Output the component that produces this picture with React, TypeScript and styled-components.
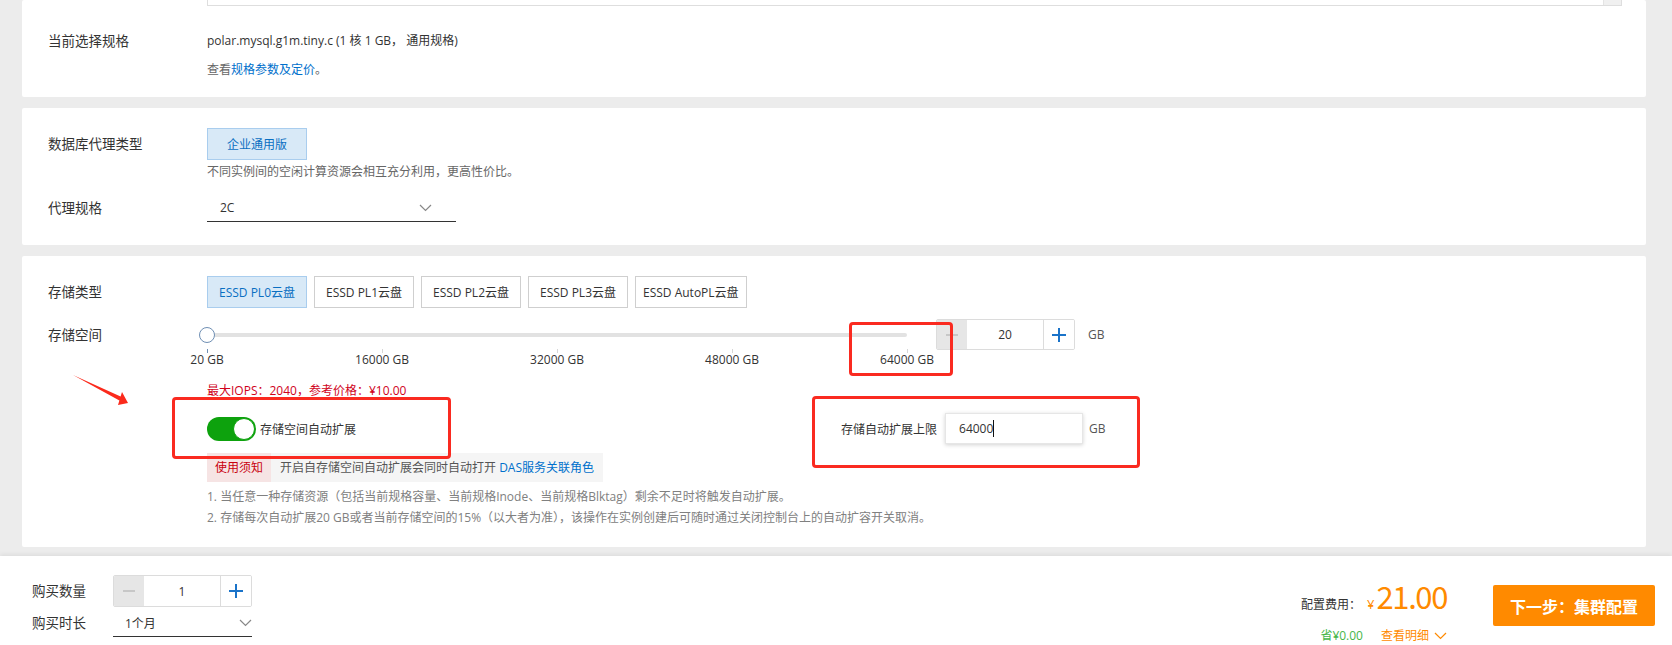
import React from 'react'
import styled, { createGlobalStyle } from 'styled-components'

const GlobalStyle = createGlobalStyle`
  html, body { margin: 0; padding: 0; }
  body {
    background: #ececec;
    font-family: 'Open Sans', 'Noto Sans CJK SC', sans-serif;
    font-size: 12px;
    color: #333;
  }
  * { box-sizing: border-box; }
`

const Page = styled.div`
  position: relative;
  width: 1672px;
  height: 645px;
  overflow: hidden;
  display: flex;
  flex-direction: column;
`

const Cards = styled.div`
  display: flex;
  flex-direction: column;
  gap: 11px;
  padding: 0 26px 0 22px;
`

const Card = styled.section<{ $pt: number; $pb: number }>`
  background: #fff;
  padding: ${(p) => p.$pt}px 0 ${(p) => p.$pb}px 26px;
  border-radius: 2px;
`

const ListTail = styled.div`
  margin-left: 159px;
  width: 1415px;
  height: 6px;
  border: 1px solid #dedede;
  border-top: none;
  display: flex;
  justify-content: flex-end;
  &::after {
    content: '';
    width: 17px;
    background: #f0f0f0;
    border-left: 1px solid #e4e4e4;
  }
`

const Row = styled.div<{ $mt?: number }>`
  display: flex;
  align-items: flex-start;
  margin-top: ${(p) => p.$mt ?? 0}px;
`

const Label = styled.div<{ $h?: number }>`
  width: 159px;
  flex-shrink: 0;
  font-size: 13.5px;
  line-height: ${(p) => p.$h ?? 20}px;
  color: #333;
`

const Field = styled.div`
  display: flex;
  flex-direction: column;
  align-items: flex-start;
`

const Value = styled.div`
  font-size: 12px;
  line-height: 20px;
  color: #333;
`

const Hint = styled.div<{ $mt?: number }>`
  font-size: 12px;
  line-height: 20px;
  color: #666;
  margin-top: ${(p) => p.$mt ?? 0}px;
`

const Link = styled.a`
  color: #0070cc;
  text-decoration: none;
`

const Options = styled.div`
  display: flex;
  gap: 7px;
`

const Option = styled.button<{ $active?: boolean }>`
  height: 32px;
  min-width: 100px;
  padding: 0 7px;
  font: inherit;
  font-size: 12px;
  background: ${(p) => (p.$active ? '#d8e9f7' : '#fff')};
  border: 1px solid ${(p) => (p.$active ? '#a9cdee' : '#cfcfcf')};
  color: ${(p) => (p.$active ? '#0a6fc2' : '#333')};
  border-radius: 0;
`

const Select = styled.div<{ $w: number; $pl: number; $pr: number }>`
  width: ${(p) => p.$w}px;
  height: 28px;
  border-bottom: 1px solid #333;
  display: flex;
  align-items: center;
  justify-content: space-between;
  padding: 0 ${(p) => p.$pr}px 0 ${(p) => p.$pl}px;
  font-size: 12px;
  color: #333;
`

const SliderLine = styled.div`
  display: flex;
  align-items: flex-start;
`

const Slider = styled.div`
  width: 700px;
`

const TrackArea = styled.div`
  position: relative;
  height: 30px;
  padding-top: 14px;
`

const Track = styled.div`
  height: 4px;
  background: #e2e2e2;
  border-radius: 2px;
`

const Thumb = styled.div`
  position: absolute;
  left: -8px;
  top: 8px;
  width: 16px;
  height: 16px;
  border-radius: 50%;
  background: #fff;
  border: 1.5px solid #6f8fb4;
`

const Ticks = styled.div`
  display: flex;
  justify-content: space-between;
`

const Tick = styled.div`
  width: 0;
  display: flex;
  flex-direction: column;
  align-items: center;
`

const TickMark = styled.div<{ $first?: boolean }>`
  width: 1px;
  height: 4px;
  background: ${(p) => (p.$first ? '#6f8fb4' : '#d6d6d6')};
`

const TickText = styled.span`
  white-space: nowrap;
  font-size: 12px;
  line-height: 14px;
  color: #333;
`

const Stepper = styled.div<{ $ml?: number; $h: number }>`
  display: flex;
  height: ${(p) => p.$h}px;
  margin-left: ${(p) => p.$ml ?? 0}px;
  border: 1px solid #dcdcdc;
  border-radius: 2px;
  overflow: hidden;
`

const StepBtn = styled.div<{ $disabled?: boolean }>`
  width: 30px;
  display: flex;
  align-items: center;
  justify-content: center;
  background: ${(p) => (p.$disabled ? '#e6e6e6' : '#fff')};
`

const StepValue = styled.div`
  width: 77px;
  display: flex;
  align-items: center;
  justify-content: center;
  background: #fff;
  border-right: 1px solid #dcdcdc;
  font-size: 12px;
  color: #333;
`

const Unit = styled.span<{ $ml: number; $h: number }>`
  margin-left: ${(p) => p.$ml}px;
  line-height: ${(p) => p.$h}px;
  font-size: 12px;
  color: #555;
`

const Iops = styled.div`
  margin-top: 14px;
  font-size: 12px;
  line-height: 20px;
  color: #d0021b;
`

const SwitchLine = styled.div`
  margin-top: 12px;
  display: flex;
  align-items: center;
  height: 31px;
`

const SwitchGroup = styled.div`
  width: 634px;
  display: flex;
  align-items: center;
  gap: 4px;
`

const Switch = styled.div<{ $on?: boolean }>`
  width: 49px;
  height: 24px;
  border-radius: 12px;
  background: ${(p) => (p.$on ? '#0da20d' : '#ccc')};
  display: flex;
  justify-content: ${(p) => (p.$on ? 'flex-end' : 'flex-start')};
  padding: 1px;
`

const Knob = styled.div`
  width: 22px;
  height: 22px;
  border-radius: 50%;
  background: #fff;
  border: 1px solid #0da20d;
`

const SwitchText = styled.span`
  font-size: 12px;
  color: #333;
`

const LimitLabel = styled.span`
  font-size: 12px;
  color: #333;
  margin-right: 8px;
`

const LimitInput = styled.div`
  width: 138px;
  height: 31px;
  border: 1px solid #e6e6e6;
  box-shadow: 0 1px 4px rgba(0, 0, 0, 0.18);
  padding-left: 13px;
  display: flex;
  align-items: center;
  font-size: 12px;
  color: #333;
`

const Caret = styled.span`
  width: 1px;
  height: 17px;
  background: #111;
`

const Notice = styled.div`
  margin-top: 9px;
  display: flex;
  height: 29px;
  background: #f5f5f5;
`

const NoticeTag = styled.span`
  padding: 0 8px;
  background: #f6e4e4;
  color: #c9000f;
  line-height: 29px;
`

const NoticeText = styled.span`
  padding: 0 9px;
  color: #555;
  line-height: 29px;
`

const Notes = styled.div`
  margin-top: 4px;
`

const Note = styled.div`
  color: #808080;
  line-height: 21px;
`

const Footer = styled.footer`
  margin-top: 9px;
  flex: 1;
  background: #fff;
  box-shadow: 0 -2px 4px rgba(0, 0, 0, 0.06);
  display: flex;
  justify-content: space-between;
  padding: 0 17px 0 32px;
`

const Buy = styled.div`
  padding-top: 19px;
  display: flex;
  flex-direction: column;
  gap: 2px;
`

const BuyRow = styled.div`
  display: flex;
  align-items: flex-start;
`

const BuyLabel = styled.div<{ $h: number }>`
  width: 81px;
  font-size: 13.5px;
  line-height: ${(p) => p.$h}px;
  color: #333;
`

const Checkout = styled.div`
  display: flex;
  align-items: flex-start;
  padding-top: 20px;
  gap: 46px;
`

const Price = styled.div`
  display: flex;
  flex-direction: column;
  align-items: flex-end;
`

const PriceLine = styled.div`
  display: flex;
  align-items: baseline;
  height: 40px;
  line-height: 40px;
`

const PriceLabel = styled.span`
  font-size: 12px;
  color: #333;
`

const Yen = styled.span`
  font-size: 13px;
  color: #ff8a00;
  margin: 0 2px 0 6px;
`

const Amount = styled.span`
  font-size: 31px;
  letter-spacing: -1.4px;
  color: #ff8a00;
  font-family: 'Noto Sans CJK SC', sans-serif;
`

const SubLine = styled.div`
  margin-top: 12px;
  display: flex;
  align-items: center;
  gap: 18px;
  font-size: 12px;
  line-height: 16px;
`

const Saved = styled.span`
  color: #45b649;
`

const Detail = styled.span`
  color: #ff8a00;
  display: flex;
  align-items: center;
  gap: 5px;
`

const NextButton = styled.button`
  margin-top: 9px;
  width: 162px;
  height: 41px;
  background: #ff8a00;
  color: #fff;
  border: none;
  border-radius: 2px;
  font-family: 'Open Sans', 'Noto Sans CJK SC', sans-serif;
  font-size: 16px;
  font-weight: 700;
`

const Mark = styled.div<{ $x: number; $y: number; $w: number; $h: number }>`
  position: absolute;
  left: ${(p) => p.$x}px;
  top: ${(p) => p.$y}px;
  width: ${(p) => p.$w}px;
  height: ${(p) => p.$h}px;
  border: 3px solid #fa2a20;
  border-radius: 4px;
  pointer-events: none;
`

const Arrow = styled.svg`
  position: absolute;
  left: 60px;
  top: 360px;
`

const Chevron = ({ color = '#888' }: { color?: string }) => (
  <svg width="13" height="8" viewBox="0 0 13 8">
    <path d="M1 1l5.5 5.5L12 1" stroke={color} strokeWidth="1.2" fill="none" />
  </svg>
)

const Minus = () => (
  <svg width="14" height="14" viewBox="0 0 14 14">
    <path d="M1 7h12" stroke="#bdbdbd" strokeWidth="1.6" />
  </svg>
)

const Plus = () => (
  <svg width="16" height="16" viewBox="0 0 16 16">
    <path d="M1 8h14M8 1v14" stroke="#1a73c9" strokeWidth="2" />
  </svg>
)

const storageTypes = ['ESSD PL0云盘', 'ESSD PL1云盘', 'ESSD PL2云盘', 'ESSD PL3云盘', 'ESSD AutoPL云盘']
const ticks = ['20 GB', '16000 GB', '32000 GB', '48000 GB', '64000 GB']

const App = () => {
  return (
    <Page>
      <GlobalStyle />
      <Cards>
        <Card $pt={0} $pb={17}>
          <ListTail />
          <Row $mt={25}>
            <Label>当前选择规格</Label>
            <Field>
              <Value>polar.mysql.g1m.tiny.c (1 核 1 GB， 通用规格)</Value>
              <Hint $mt={9}>
                查看<Link>规格参数及定价</Link>。
              </Hint>
            </Field>
          </Row>
        </Card>

        <Card $pt={20} $pb={23}>
          <Row>
            <Label $h={32}>数据库代理类型</Label>
            <Field>
              <Option $active>企业通用版</Option>
              <Hint $mt={2}>不同实例间的空闲计算资源会相互充分利用，更高性价比。</Hint>
            </Field>
          </Row>
          <Row $mt={12}>
            <Label $h={28}>代理规格</Label>
            <Select $w={249} $pl={13} $pr={24}>
              2C
              <Chevron />
            </Select>
          </Row>
        </Card>

        <Card $pt={20} $pb={19}>
          <Row>
            <Label $h={32}>存储类型</Label>
            <Options>
              {storageTypes.map((t, i) => (
                <Option key={t} $active={i === 0}>
                  {t}
                </Option>
              ))}
            </Options>
          </Row>
          <Row $mt={11}>
            <Label $h={32}>存储空间</Label>
            <Field>
              <SliderLine>
                <Slider>
                  <TrackArea>
                    <Track />
                    <Thumb />
                  </TrackArea>
                  <Ticks>
                    {ticks.map((t, i) => (
                      <Tick key={t}>
                        <TickMark $first={i === 0} />
                        <TickText>{t}</TickText>
                      </Tick>
                    ))}
                  </Ticks>
                </Slider>
                <Stepper $ml={29} $h={31}>
                  <StepBtn $disabled>
                    <Minus />
                  </StepBtn>
                  <StepValue>20</StepValue>
                  <StepBtn>
                    <Plus />
                  </StepBtn>
                </Stepper>
                <Unit $ml={13} $h={31}>
                  GB
                </Unit>
              </SliderLine>
              <Iops>最大IOPS：2040，参考价格：¥10.00</Iops>
              <SwitchLine>
                <SwitchGroup>
                  <Switch $on>
                    <Knob />
                  </Switch>
                  <SwitchText>存储空间自动扩展</SwitchText>
                </SwitchGroup>
                <LimitLabel>存储自动扩展上限</LimitLabel>
                <LimitInput>
                  64000
                  <Caret />
                </LimitInput>
                <Unit $ml={6} $h={31}>
                  GB
                </Unit>
              </SwitchLine>
              <Notice>
                <NoticeTag>使用须知</NoticeTag>
                <NoticeText>
                  开启自存储空间自动扩展会同时自动打开 <Link>DAS服务关联角色</Link>
                </NoticeText>
              </Notice>
              <Notes>
                <Note>1. 当任意一种存储资源（包括当前规格容量、当前规格Inode、当前规格Blktag）剩余不足时将触发自动扩展。</Note>
                <Note>2. 存储每次自动扩展20 GB或者当前存储空间的15%（以大者为准），该操作在实例创建后可随时通过关闭控制台上的自动扩容开关取消。</Note>
              </Notes>
            </Field>
          </Row>
        </Card>
      </Cards>

      <Footer>
        <Buy>
          <BuyRow>
            <BuyLabel $h={32}>购买数量</BuyLabel>
            <Stepper $h={32}>
              <StepBtn $disabled>
                <Minus />
              </StepBtn>
              <StepValue>1</StepValue>
              <StepBtn>
                <Plus />
              </StepBtn>
            </Stepper>
          </BuyRow>
          <BuyRow>
            <BuyLabel $h={28}>购买时长</BuyLabel>
            <Select $w={139} $pl={12} $pr={0}>
              1个月
              <Chevron />
            </Select>
          </BuyRow>
        </Buy>
        <Checkout>
          <Price>
            <PriceLine>
              <PriceLabel>配置费用：</PriceLabel>
              <Yen>¥</Yen>
              <Amount>21.00</Amount>
            </PriceLine>
            <SubLine>
              <Saved>省¥0.00</Saved>
              <Detail>
                查看明细
                <Chevron color="#ff8a00" />
              </Detail>
            </SubLine>
          </Price>
          <NextButton>下一步：集群配置</NextButton>
        </Checkout>
      </Footer>

      <Mark $x={849} $y={322} $w={104} $h={54} />
      <Mark $x={172} $y={397} $w={279} $h={62} />
      <Mark $x={812} $y={396} $w={328} $h={72} />
      <Arrow width="80" height="60" viewBox="0 0 80 60">
        <polygon points="13,15 60.6,36.6 62,32 68,43 58,45 59.4,40.4" fill="#fb2a1c" />
      </Arrow>
    </Page>
  )
}

export default App
